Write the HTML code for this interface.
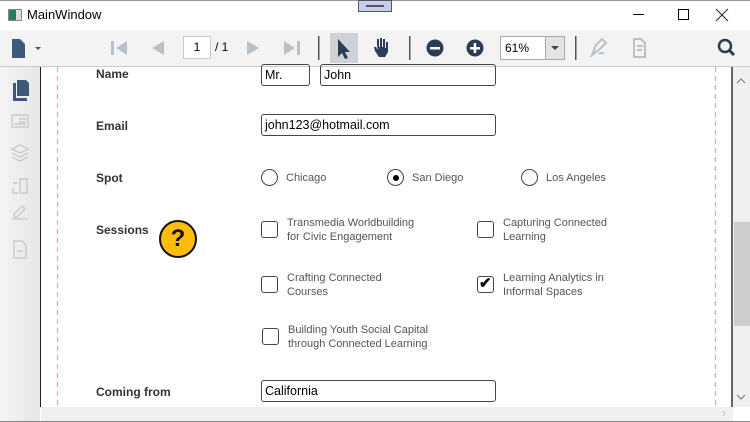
<!DOCTYPE html>
<html><head><style>
*{margin:0;padding:0;box-sizing:border-box}
body{width:750px;height:422px;overflow:hidden;background:#fff;font-family:"Liberation Sans",sans-serif;position:relative}
.a{position:absolute}
.lbl{font-size:12px;font-weight:bold;color:#333}
.inp{border:1.5px solid #4a4444;border-radius:3px;font-size:12.5px;color:#000;padding:2px 3px;height:22px;line-height:16px}
.t{font-size:11px;color:#555;line-height:14px}
.rb{width:17px;height:17px;border:1.5px solid #444;border-radius:50%}
.cb{width:17px;height:17px;border:1.5px solid #444;border-radius:3px}
</style></head><body>
<div class="a" style="left:0;top:0;width:750px;height:30px;background:#fff;border-top:1px solid #999"></div>
<div class="a" style="left:8px;top:9px;width:14px;height:12px;border:1px solid #888;background:linear-gradient(90deg,#2a7a6a 60%,#ddd 60%)"></div>
<div class="a" style="left:27px;top:7px;font-size:13px;color:#000">MainWindow</div>
<div class="a" style="left:358px;top:0;width:34px;height:12px;background:#c8cde8;border:1px solid #556"></div>
<div class="a" style="left:366px;top:5px;width:18px;height:2px;background:#556"></div>
<div class="a" style="left:633px;top:14px;width:11px;height:1px;background:#000"></div>
<div class="a" style="left:678px;top:9px;width:11px;height:11px;border:1px solid #000"></div>
<svg class="a" style="left:715px;top:8px" width="14" height="14"><path d="M1 1l12 12M13 1L1 13" stroke="#222" stroke-width="1"/></svg>
<div class="a" style="left:0;top:30px;width:750px;height:37px;background:#f3f3f3;border-bottom:1px solid #ccc"></div>
<svg class="a" style="left:0;top:30px" width="750" height="37">
<path d="M12 9h8l5 5v14H12z" fill="#3d5878"/><path d="M35 17h6l-3 3z" fill="#3d5878"/>
<g fill="#b8c0c8"><rect x="111" y="11" width="3" height="14"/><path d="M127 11v14l-11-7z"/><path d="M164 11v14l-12-7z"/><path d="M247 11v14l12-7z"/><path d="M284 11v14l11-7z"/><rect x="297" y="11" width="3" height="14"/></g>
<rect x="318" y="6" width="1.5" height="24" fill="#555"/>
<rect x="330" y="3" width="28" height="30" fill="#cfd3d7"/>
<path d="M338 9v18l4-4 3 6 3-1-3-6h5z" fill="#2a3d55"/>
<path d="M377 15v-6h2v8h1v-9h2v9h1v-8h2v9h1v-6h2v10l-3 5h-6l-4-6-1-4 2 0 2 3z" fill="#2a3d55"/>
<rect x="409" y="6" width="1.5" height="24" fill="#555"/>
<circle cx="435" cy="18" r="8.5" fill="#2a3d55"/><rect x="430" y="17" width="10" height="2.5" fill="#fff"/>
<circle cx="475" cy="18" r="8.5" fill="#2a3d55"/><rect x="470" y="17" width="10" height="2.5" fill="#fff"/><rect x="473.7" y="13" width="2.5" height="10" fill="#fff"/>
<rect x="575" y="6" width="1.5" height="24" fill="#555"/>
<path d="M592 25l4-10 6-6 4 4-6 6z M599 24q3-2 5 0" stroke="#b8c0c8" stroke-width="2" fill="none"/>
<path d="M634 9h7l4 4v14h-11z M637 16h6 M637 20h5" stroke="#b8c0c8" stroke-width="2" fill="none"/>
<circle cx="725" cy="16" r="6" stroke="#2a3d55" stroke-width="2.5" fill="none"/><path d="M729 20l5 5" stroke="#2a3d55" stroke-width="3"/>
</svg>
<div class="a" style="left:183px;top:36px;width:28px;height:23px;background:#fff;border:1px solid #ccc;font-size:12px;text-align:center;line-height:21px">1</div>
<div class="a" style="left:215px;top:40px;font-size:12px">/ 1</div>
<div class="a" style="left:500px;top:36px;width:65px;height:24px;background:#fff;border:1px solid #aaa;font-size:12px;line-height:22px;padding-left:4px">61%</div>
<div class="a" style="left:545px;top:37px;width:19px;height:22px;background:#e4e4e4;border-left:1px solid #aaa"></div>
<div class="a" style="left:551px;top:46px;border:4px solid transparent;border-top:4px solid #444"></div>
<div class="a" style="left:0;top:67px;width:40px;height:355px;background:linear-gradient(90deg,#f4f4f4,#e6e6e6)"></div>
<div class="a" style="left:40px;top:67px;width:1px;height:340px;background:#222"></div>
<svg class="a" style="left:0;top:67px" width="40" height="200">
<path d="M13 16h3v15h11v3H13z M17 13h9l3 3v13H17z" fill="#3d5878"/>
<g stroke="#c8ccd0" stroke-width="1.5" fill="none"><rect x="12" y="48" width="16" height="12"/><path d="M19 52h7M19 55h7M14 57h12"/>
<path d="M12 82l8-4 8 4-8 4z M12 86l8 4 8-4 M12 90l8 4 8-4"/>
<rect x="20" y="112" width="7" height="14"/><path d="M13 116h5 M13 121v5h5"/>
<path d="M14 147l8-8 3 3-8 8h-3z M12 152h16"/>
<path d="M14 174h8l4 4v13H14z M17 184h6"/></g>
</svg>
<svg class="a" style="left:0;top:67px" width="750" height="340">
<path d="M57.5 0V340M715.5 0V340" stroke="#f0a0a0" stroke-width="1.2" stroke-dasharray="5 4"/>
</svg>
<div class="a" style="left:731px;top:67px;width:2px;height:340px;background:#666"></div>
<div class="a" style="left:733px;top:67px;width:17px;height:340px;background:#f0f0f0"></div>
<div class="a" style="left:734px;top:222px;width:16px;height:104px;background:#cdcdcd"></div>
<svg class="a" style="left:733px;top:67px" width="17" height="340"><path d="M4 16l4-4 4 4M4 328l4 4 4-4" stroke="#777" fill="none"/></svg>
<div class="a" style="left:41px;top:407px;width:692px;height:15px;background:#f0f0f0"></div>
<div class="a" style="left:722px;top:406px;font-size:12px;color:#bbb">›</div>
<div class="a" style="left:0;top:421px;width:750px;height:1px;background:#888"></div>
<div class="a lbl" style="left:96px;top:67px">Name</div>
<div class="a inp" style="left:261px;top:64px;width:49px">Mr.</div>
<div class="a inp" style="left:320px;top:64px;width:176px">John</div>
<div class="a lbl" style="left:96px;top:119px">Email</div>
<div class="a inp" style="left:261px;top:114px;width:235px">john123@hotmail.com</div>
<div class="a lbl" style="left:96px;top:171px">Spot</div>
<div class="a rb" style="left:261px;top:169px"></div><div class="a t" style="left:286px;top:171px">Chicago</div>
<div class="a rb" style="left:387px;top:169px"></div><div class="a" style="left:392.5px;top:174.5px;width:6px;height:6px;border-radius:50%;background:#000"></div><div class="a t" style="left:412px;top:171px">San Diego</div>
<div class="a rb" style="left:521px;top:169px"></div><div class="a t" style="left:546px;top:171px">Los Angeles</div>
<div class="a lbl" style="left:96px;top:223px">Sessions</div>
<div class="a" style="left:159px;top:220px;width:38px;height:38px;border-radius:50%;background:#fbbd0a;border:2.5px solid #111;font-weight:bold;font-size:24px;text-align:center;line-height:33px;color:#111">?</div>
<div class="a cb" style="left:261px;top:221px"></div><div class="a t" style="left:287px;top:216px">Transmedia Worldbuilding<br>for Civic Engagement</div>
<div class="a cb" style="left:477px;top:221px"></div><div class="a t" style="left:503px;top:216px">Capturing Connected<br>Learning</div>
<div class="a cb" style="left:261px;top:276px"></div><div class="a t" style="left:287px;top:271px">Crafting Connected<br>Courses</div>
<div class="a cb" style="left:477px;top:276px"></div><div class="a" style="left:479px;top:274px;font-size:15px;font-weight:bold">✔</div><div class="a t" style="left:503px;top:271px">Learning Analytics in<br>Informal Spaces</div>
<div class="a cb" style="left:262px;top:328px"></div><div class="a t" style="left:288px;top:323px">Building Youth Social Capital<br>through Connected Learning</div>
<div class="a lbl" style="left:96px;top:385px">Coming from</div>
<div class="a inp" style="left:261px;top:380px;width:235px">California</div>
</body></html>
